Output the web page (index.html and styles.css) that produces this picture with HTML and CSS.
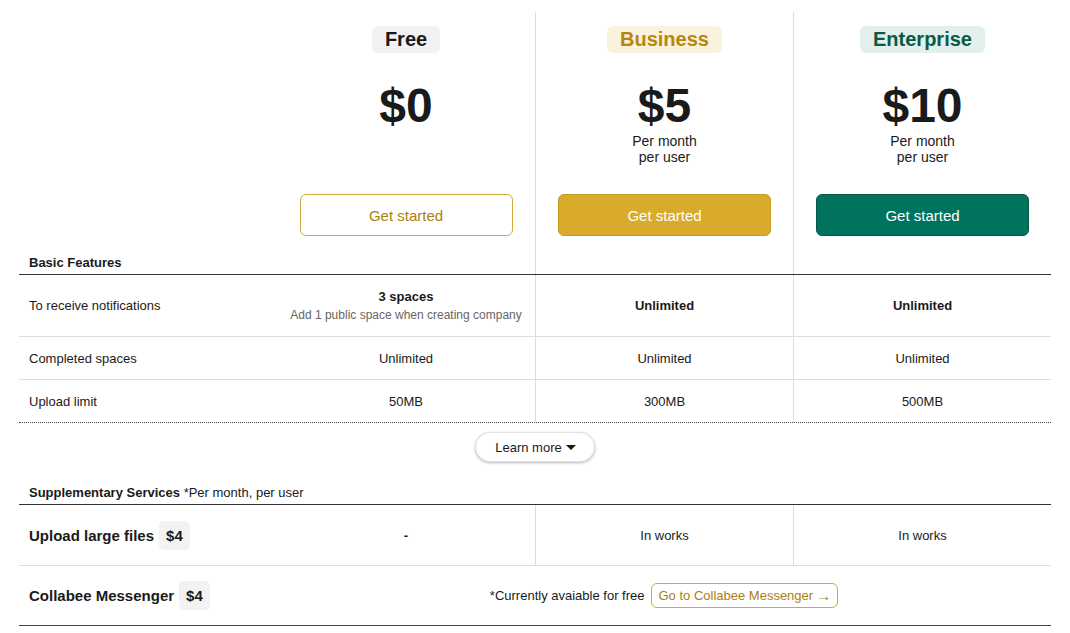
FILE: index.html
```html
<!DOCTYPE html>
<html>
<head>
<meta charset="utf-8">
<link rel="stylesheet" href="styles.css">
</head>
<body>
<div class="pricing">
  <div class="grid head-row">
    <div class="head-label">Basic Features</div>
    <div class="tier">
      <span class="badge badge-free">Free</span>
      <div class="price-area">
        <div class="price">$0</div>
      </div>
      <button class="btn btn-free">Get started</button>
    </div>
    <div class="tier divider">
      <span class="badge badge-business">Business</span>
      <div class="price-area">
        <div class="price">$5</div>
        <div class="per">Per month<br>per user</div>
      </div>
      <button class="btn btn-business">Get started</button>
    </div>
    <div class="tier divider">
      <span class="badge badge-enterprise">Enterprise</span>
      <div class="price-area">
        <div class="price">$10</div>
        <div class="per">Per month<br>per user</div>
      </div>
      <button class="btn btn-enterprise">Get started</button>
    </div>
  </div>

  <div class="grid row row-tall">
    <div class="cell label-cell">To receive notifications</div>
    <div class="cell value"><div class="stack"><b>3 spaces</b><span class="sub">Add 1 public space when creating company</span></div></div>
    <div class="cell value divider"><b>Unlimited</b></div>
    <div class="cell value divider"><b>Unlimited</b></div>
  </div>
  <div class="grid row">
    <div class="cell label-cell">Completed spaces</div>
    <div class="cell value">Unlimited</div>
    <div class="cell value divider">Unlimited</div>
    <div class="cell value divider">Unlimited</div>
  </div>
  <div class="grid row row-dotted">
    <div class="cell label-cell">Upload limit</div>
    <div class="cell value">50MB</div>
    <div class="cell value divider">300MB</div>
    <div class="cell value divider">500MB</div>
  </div>

  <div class="more-wrap">
    <button class="learn-more">Learn more <span class="caret"></span></button>
  </div>

  <div class="supp-title"><b>Supplementary Services</b> *Per month, per user</div>

  <div class="grid row row-service">
    <div class="cell label-cell service-label">Upload large files <span class="fee">$4</span></div>
    <div class="cell value"><b>-</b></div>
    <div class="cell value divider">In works</div>
    <div class="cell value divider">In works</div>
  </div>
  <div class="grid row row-service row-last">
    <div class="cell label-cell service-label">Collabee Messenger <span class="fee">$4</span></div>
    <div class="cell value span3">*Currently avaiable for free <a class="go-link">Go to Collabee Messenger <span class="arrow">→</span></a></div>
  </div>
</div>
</body>
</html>
```

FILE: styles.css
```css
* { box-sizing: border-box; }
html, body { margin: 0; padding: 0; background: #fff; }
body {
  font-family: "Liberation Sans", Arial, sans-serif;
  color: #1a1a1a;
  font-size: 13px;
}
.pricing {
  width: 1032px;
  margin-left: 19px;
  padding-top: 12px;
}
.grid {
  display: grid;
  grid-template-columns: repeat(4, 258px);
}
.divider { border-left: 1px solid #dcdcdc; }

.head-row { border-bottom: 1px solid #333; }
.head-label {
  display: flex;
  align-items: flex-end;
  font-weight: bold;
  padding-left: 10px;
  padding-bottom: 4px;
  line-height: 15px;
}
.tier {
  display: flex;
  flex-direction: column;
  align-items: center;
  padding-top: 14px;
  padding-bottom: 38px;
}
.badge {
  display: inline-block;
  height: 27px;
  line-height: 27px;
  padding: 0 13px;
  border-radius: 6px;
  font-size: 20px;
  font-weight: bold;
}
.badge-free { background: #f2f2f2; color: #1a1a1a; }
.badge-business { background: #faf2dd; color: #b7870c; }
.badge-enterprise { background: #e3efea; color: #0c5a44; }

.price-area {
  margin-top: 29px;
  height: 112px;
  text-align: center;
}
.price {
  font-size: 48px;
  line-height: 48px;
  font-weight: bold;
  color: #1a1a1a;
}
.per {
  margin-top: 3px;
  font-size: 14px;
  line-height: 16px;
  color: #1a1a1a;
}
.btn {
  width: 213px;
  height: 42px;
  border-radius: 6px;
  font-family: "Liberation Sans", Arial, sans-serif;
  font-size: 15px;
  cursor: pointer;
}
.btn-free { background: #fff; border: 1px solid #cfa93a; color: #a98110; }
.btn-business { background: #d8ab2b; border: 1px solid #c39a22; color: #fff; }
.btn-enterprise { background: #00735f; border: 1px solid #0a5646; color: #fff; }

.row { border-bottom: 1px solid #dedede; }
.row > .cell { height: 42px; }
.row-tall > .cell { height: 61px; }
.row-dotted { border-bottom: 1px dotted #444; }
.cell {
  display: flex;
  align-items: center;
}
.label-cell { padding-left: 10px; }
.value { justify-content: center; text-align: center; }
.stack { display: flex; flex-direction: column; align-items: center; gap: 4px; }
.sub { font-size: 12px; color: #666; }

.more-wrap {
  display: flex;
  justify-content: center;
  padding-top: 9px;
}
.learn-more {
  height: 30px;
  padding: 0 18px 0 19px;
  border-radius: 15px;
  border: 1px solid #e2e2e2;
  background: #fff;
  box-shadow: 0 1px 3px rgba(0,0,0,0.28);
  font-family: "Liberation Sans", Arial, sans-serif;
  font-size: 13px;
  color: #1a1a1a;
  display: flex;
  align-items: center;
  gap: 4px;
}
.caret {
  width: 0; height: 0;
  border-left: 5px solid transparent;
  border-right: 5px solid transparent;
  border-top: 5px solid #1a1a1a;
}
.supp-title {
  margin-top: 23px;
  padding-left: 10px;
  line-height: 15px;
  padding-bottom: 4px;
  border-bottom: 1px solid #333;
}
.row-service > .cell { height: 60px; }
.row-last { border-bottom: 1px solid #444; }
.row-last > .cell { height: 59px; }
.service-label {
  font-size: 15px;
  font-weight: bold;
  gap: 5px;
}
.fee {
  display: inline-flex;
  align-items: center;
  justify-content: center;
  height: 29px;
  padding: 0 7px;
  background: #f3f2f0;
  border-radius: 5px;
}
.span3 { grid-column: 2 / 5; gap: 7px; }
.go-link {
  display: inline-flex;
  align-items: center;
  height: 25px;
  padding: 0 6px;
  border: 1px solid #cfa93a;
  border-radius: 6px;
  color: #a98110;
  font-size: 13px;
  gap: 3px;
}
.arrow { font-size: 15px; line-height: 1; }
```
